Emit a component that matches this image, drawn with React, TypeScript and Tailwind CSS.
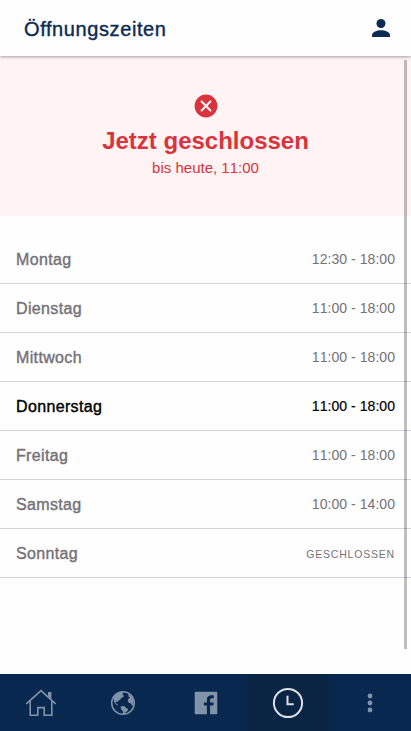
import { FC } from "react";

type OpeningDay = {
  day: string;
  hours?: string;
  today?: boolean;
};

const days: OpeningDay[] = [
  { day: "Montag", hours: "12:30 - 18:00" },
  { day: "Dienstag", hours: "11:00 - 18:00" },
  { day: "Mittwoch", hours: "11:00 - 18:00" },
  { day: "Donnerstag", hours: "11:00 - 18:00", today: true },
  { day: "Freitag", hours: "11:00 - 18:00" },
  { day: "Samstag", hours: "10:00 - 14:00" },
  { day: "Sonntag" },
];

const PersonIcon = () => (
  <svg width="18" height="18" viewBox="0 0 18 18" fill="currentColor">
    <circle cx="9" cy="4.5" r="4.5" />
    <path d="M0 18v-1.8C0 13 5 11.3 9 11.3s9 1.7 9 4.9V18z" />
  </svg>
);

const ClosedIcon = () => (
  <svg width="24" height="24" viewBox="0 0 24 24">
    <circle cx="12" cy="12" r="11.4" fill="#d9333d" />
    <path
      d="M7.6 7.4l8.8 9.2M16.4 7.4l-8.8 9.2"
      stroke="#fff3f3"
      strokeWidth="2.1"
      strokeLinecap="round"
    />
  </svg>
);

const HomeIcon = () => (
  <svg
    width="32"
    height="32"
    viewBox="0 0 32 32"
    fill="none"
    stroke="currentColor"
    strokeWidth="1.6"
  >
    <path d="M1.3 16.8L16 3.6l14.7 13.2" />
    <path d="M5.2 14v14.2h7.6v-7.6h6.4v7.6h7.6V14" />
    <path d="M23 5h3.4v7.4L23 9.3z" fill="currentColor" stroke="none" />
  </svg>
);

const GlobeIcon = () => (
  <svg width="26" height="26" viewBox="0 0 26 26">
    <circle cx="13" cy="13" r="11.3" fill="none" stroke="currentColor" strokeWidth="1.5" />
    <path
      fill="currentColor"
      d="M3.4 7.6C5 4.4 8 2.2 11.6 1.7l1.6 1.5-1 1.4 1.6.6-.4 1.8-2.2.9-1.2 2-2 .9.1 1.3-1.6-.6-1 .5.3 1.3 1.5.6.8 1.6-2.2-.9L4 11.8z"
    />
    <path
      fill="currentColor"
      d="M10.6 16.4l1.9-.5 2.6.7 1 1.5 2 .8-.6 2-1.7 1.1-1.1 2.1-1.4.2-.5-3.3-1.7-1.6z"
    />
    <path
      fill="currentColor"
      d="M18.2 3.8c2.8 1.6 4.8 4.2 5.3 7.4l-.1 3.6-1.3 1.2-.9-2.6-2.2-.4-1.3-2 .8-2.4 1.7-.8-1.7-1.3z"
    />
  </svg>
);

const FacebookIcon = () => (
  <svg className="ml-px" width="24" height="24" viewBox="0 0 24 24" fill="currentColor">
    <path d="M1.8.7h20.4c.6 0 1.1.5 1.1 1.1v20.4c0 .6-.5 1.1-1.1 1.1h-6.1v-8.8h3.1l.5-3.1h-3.6V9.2c0-1.2.5-1.9 1.9-1.9h1.8V4.5c-.5-.1-1.4-.2-2.5-.2-2.8 0-4.4 1.6-4.4 4.5v2.6H9.8v3.1h3.1v8.8H1.8c-.6 0-1.1-.5-1.1-1.1V1.8c0-.6.5-1.1 1.1-1.1z" />
  </svg>
);

const ClockIcon = () => (
  <svg width="32" height="32" viewBox="0 0 32 32" fill="none" stroke="currentColor">
    <circle cx="16" cy="16" r="14.1" strokeWidth="2" />
    <path d="M15.5 8.7v8.6h6.2" strokeWidth="2" />
  </svg>
);

const MoreIcon = () => (
  <svg width="6" height="20" viewBox="0 0 6 20" fill="currentColor">
    <circle cx="3" cy="3" r="2.4" />
    <circle cx="3" cy="10" r="2.4" />
    <circle cx="3" cy="17" r="2.4" />
  </svg>
);

const tabs = [
  { name: "home", Icon: HomeIcon },
  { name: "web", Icon: GlobeIcon },
  { name: "facebook", Icon: FacebookIcon },
  { name: "hours", Icon: ClockIcon, active: true },
  { name: "more", Icon: MoreIcon },
];

const DayRow: FC<OpeningDay> = ({ day, hours, today }) => (
  <li
    className={`flex h-[49px] items-center justify-between border-b border-[#d5d3d9] px-4 ${
      today ? "text-black" : "text-[#747277]"
    }`}
  >
    <span className="pt-0.5 text-base leading-5 tracking-[0.35px] [-webkit-text-stroke:0.4px_currentColor]">
      {day}
    </span>
    {hours ? (
      <span
        className={`text-[14px] leading-5 tracking-[0.05px] [font-kerning:none] ${
          today ? "[-webkit-text-stroke:0.2px_currentColor]" : ""
        }`}
      >
        {hours}
      </span>
    ) : (
      <span className="pt-0.5 text-[10.5px] leading-5 tracking-[0.8px] uppercase">
        Geschlossen
      </span>
    )}
  </li>
);

const App: FC = () => {
  return (
    <div className="relative flex h-[731px] w-[411px] flex-col overflow-hidden bg-[#fefefe] font-['Liberation_Sans',Arial,sans-serif]">
      <header className="z-10 flex h-14 shrink-0 items-center justify-between bg-[#fefefe] pr-[21px] pl-6 text-[#0c2b52] shadow-[0_1px_3px_rgba(0,0,0,0.35)]">
        <h1 className="pt-0.5 text-xl leading-6 tracking-[0.6px] [-webkit-text-stroke:0.4px_currentColor]">
          Öffnungszeiten
        </h1>
        <PersonIcon />
      </header>

      <main className="flex-1">
        <section className="flex h-40 flex-col items-center bg-[#fff3f3] pt-[38px] text-[#d9333d]">
          <ClosedIcon />
          <h2 className="mt-[9px] text-2xl leading-7 font-bold">
            Jetzt geschlossen
          </h2>
          <p className="mt-[3px] text-[15px] leading-5 [font-kerning:none]">
            bis heute, 11:00
          </p>
        </section>

        <ul className="pt-[19px]">
          {days.map((entry) => (
            <DayRow key={entry.day} {...entry} />
          ))}
        </ul>
      </main>

      {/* Scroll indicator on top of the content */}
      <div className="absolute top-[60px] right-1 h-[589px] w-[3px] bg-black/25" />

      <nav className="grid h-[57px] shrink-0 grid-cols-5 bg-[#082850]">
        {tabs.map(({ name, Icon, active }) => (
          <button
            key={name}
            type="button"
            aria-label={name}
            className={`flex items-center justify-center ${
              active ? "bg-[#0a2543] text-[#dce1e8]" : "text-[#8193a8]"
            }`}
          >
            <Icon />
          </button>
        ))}
      </nav>
    </div>
  );
};

export default App;
